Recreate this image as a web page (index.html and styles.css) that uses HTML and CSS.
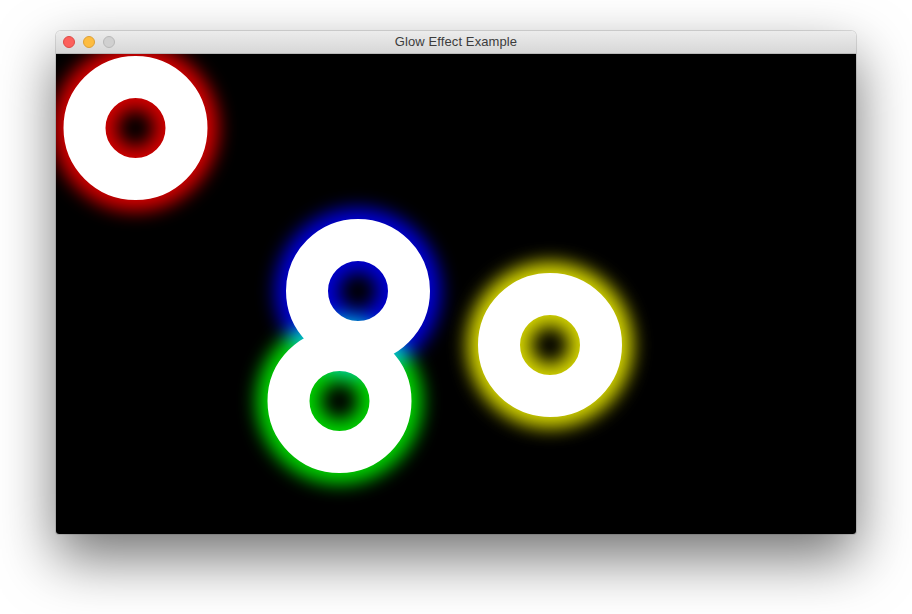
FILE: index.html
```html
<!DOCTYPE html>
<html>
<head>
<meta charset="utf-8">
<link rel="stylesheet" href="styles.css">
</head>
<body>
<div class="window">
  <div class="titlebar">
    <div class="lights">
      <span class="light close"></span>
      <span class="light min"></span>
      <span class="light max"></span>
    </div>
    <div class="title">Glow Effect Example</div>
  </div>
  <div class="content">
    <svg class="canvas" width="800" height="480" viewBox="0 0 800 480">
      <defs>
        <filter id="glow" x="-60%" y="-60%" width="220%" height="220%">
          <feGaussianBlur stdDeviation="9"/>
        </filter>
      </defs>
      <g fill="none" stroke-width="64">
        <circle class="glow" filter="url(#glow)" cx="79.5" cy="74" r="51" stroke="#d40000"/>
        <circle class="glow" filter="url(#glow)" cx="302" cy="237" r="51" stroke="#0000d4"/>
        <circle class="glow" filter="url(#glow)" cx="283.5" cy="347" r="51" stroke="#00d400"/>
        <circle class="glow" filter="url(#glow)" cx="494" cy="291" r="51" stroke="#d4d400"/>
      </g>
      <g fill="none" stroke="#ffffff" stroke-width="42">
        <circle cx="79.5" cy="74" r="51"/>
        <circle cx="302" cy="237" r="51"/>
        <circle cx="283.5" cy="347" r="51"/>
        <circle cx="494" cy="291" r="51"/>
      </g>
    </svg>
  </div>
</div>
</body>
</html>
```
FILE: styles.css
```css
html, body {
  margin: 0;
  background: #ffffff;
}
body {
  padding: 31px 56px 0;
  width: 912px;
  height: 614px;
  box-sizing: border-box;
  overflow: hidden;
}
.window {
  width: 800px;
  border-radius: 5px 5px 3px 3px;
  overflow: hidden;
  box-shadow: 0 24px 56px rgba(0, 0, 0, 0.55), 0 0 0 1px rgba(0, 0, 0, 0.12);
}
.titlebar {
  height: 22px;
  border-bottom: 1px solid #b9b9b9;
  background: linear-gradient(#ececec, #d7d7d7);
  display: flex;
  align-items: center;
  justify-content: center;
  position: relative;
}
.lights {
  position: absolute;
  left: 7px;
  top: 5px;
  display: flex;
  gap: 8px;
}
.light {
  width: 12px;
  height: 12px;
  border-radius: 50%;
  box-sizing: border-box;
}
.close { background: #fc605c; border: 1px solid #de4a45; }
.min { background: #fdbc40; border: 1px solid #dea034; }
.max { background: #d0d0d0; border: 1px solid #b8b8b8; }
.title {
  font-family: "Liberation Sans", Arial, sans-serif;
  font-size: 13px;
  letter-spacing: 0.1px;
  color: #3c3c3c;
  line-height: 22px;
}
.content {
  height: 480px;
  background: #000000;
}
.canvas {
  display: block;
}
.glow {
  mix-blend-mode: screen;
}
```
